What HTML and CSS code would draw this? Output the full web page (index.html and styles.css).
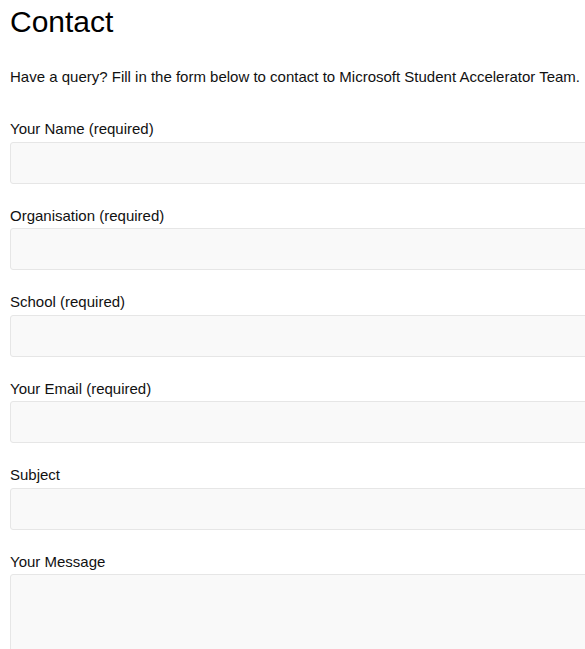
FILE: index.html
```html
<!DOCTYPE html>
<html lang="en">
<head>
<meta charset="utf-8">
<title>Contact</title>
<link rel="stylesheet" href="styles.css">
</head>
<body>
<div class="page">
  <h1 class="title">Contact</h1>
  <p class="intro">Have a query? Fill in the form below to contact to Microsoft Student Accelerator Team.</p>
  <form class="form">
    <div class="field">
      <label class="label">Your Name (required)</label>
      <input class="input" type="text">
    </div>
    <div class="field">
      <label class="label">Organisation (required)</label>
      <input class="input" type="text">
    </div>
    <div class="field">
      <label class="label">School (required)</label>
      <input class="input" type="text">
    </div>
    <div class="field">
      <label class="label">Your Email (required)</label>
      <input class="input" type="email">
    </div>
    <div class="field">
      <label class="label">Subject</label>
      <input class="input" type="text">
    </div>
    <div class="field">
      <label class="label">Your Message</label>
      <textarea class="input textarea"></textarea>
    </div>
  </form>
</div>
</body>
</html>
```

FILE: styles.css
```css
html, body {
  margin: 0;
  padding: 0;
  overflow: hidden;
  background: #fff;
}
body {
  font-family: "Liberation Sans", Arial, sans-serif;
  color: #111;
}
.page {
  padding: 0 0 0 10px;
  width: 620px;
}
.title {
  font-size: 30px;
  font-weight: 400;
  line-height: 36px;
  margin: 4px 0 0 0;
  color: #000;
}
.intro {
  font-size: 15px;
  line-height: 20px;
  margin: 27px 0 0 0;
}
.form {
  display: flex;
  flex-direction: column;
  gap: 22px;
  margin-top: 32px;
}
.field {
  display: flex;
  flex-direction: column;
  gap: 3px;
}
.label {
  font-size: 15px;
  line-height: 19.5px;
}
.input {
  box-sizing: border-box;
  width: 100%;
  height: 42px;
  margin: 0;
  background: #f9f9f9;
  border: 1px solid #e6e6e6;
  border-radius: 3px;
  font: inherit;
  padding: 8px;
  outline: none;
}
.textarea {
  height: 200px;
  resize: none;
}
```
